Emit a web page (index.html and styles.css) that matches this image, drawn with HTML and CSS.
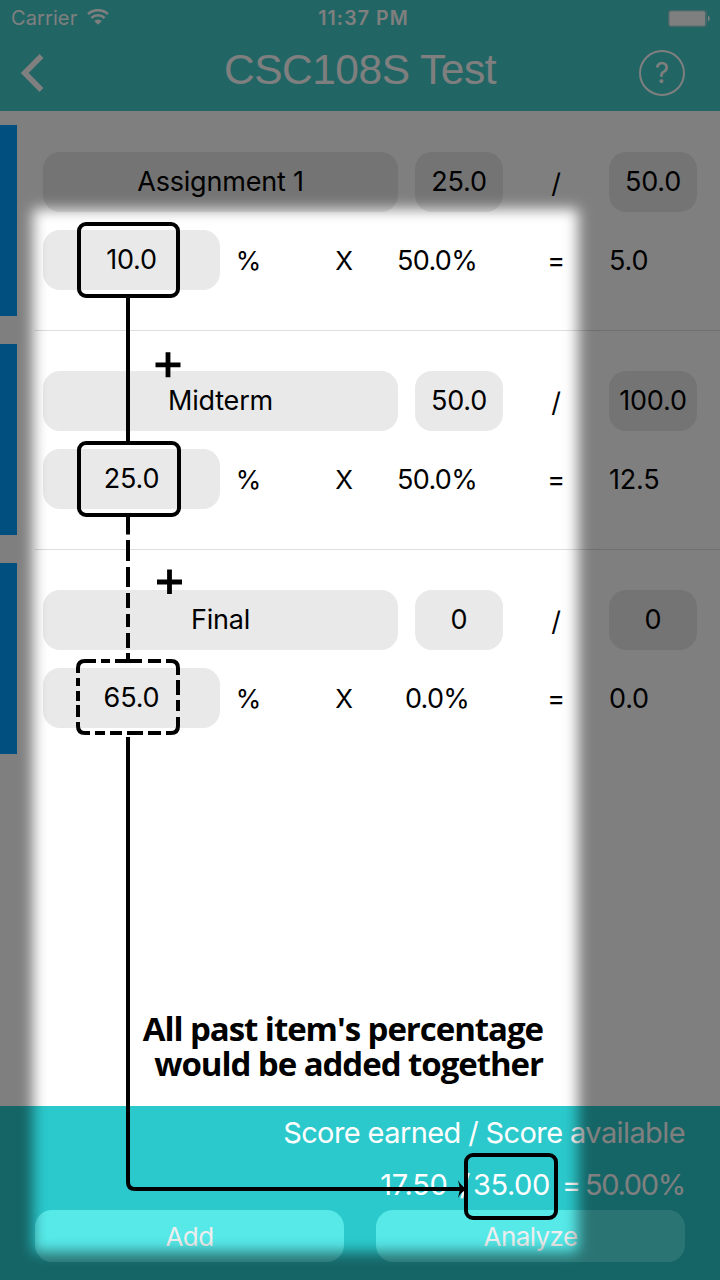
FILE: index.html
```html
<!DOCTYPE html>
<html lang="en">
<head>
<meta charset="utf-8">
<title>CSC108S Test</title>
<link rel="stylesheet" href="styles.css">
</head>
<body>
<div class="screen">
  <header class="header">
    <div class="status">
      <div class="carrier"><span class="carrier-name">Carrier</span>
        <svg class="wifi" width="22" height="16" viewBox="0 0 22 16"><g fill="none" stroke="#fff" stroke-width="2.5"><path d="M1 5.2a14.4 14.4 0 0 1 20 0"/><path d="M4.4 9a9.4 9.4 0 0 1 13.2 0"/></g><path d="M7.200 12a5.400 5.400 0 0 1 7.600 0L11 15.800z" fill="#fff"/></svg>
      </div>
      <span class="time">11:37 PM</span>
      <svg class="battery" width="42" height="17" viewBox="0 0 42 17"><rect x=".5" y=".5" width="38" height="16" rx="2.5" fill="none" stroke="#9fcaca"/><rect x="1.3" y="1.3" width="36" height="14.4" rx="1.5" fill="#fff"/><path d="M40 5.5c2.3 1 2.3 5 0 6z" fill="#fff"/></svg>
    </div>
    <div class="nav">
      <svg class="back" width="24" height="38" viewBox="0 0 24 38"><path d="M20.5 2 3.700 19l16.800 17" fill="none" stroke="#fff" stroke-width="5.500"/></svg>
      <h1 class="title">CSC108S Test</h1>
      <span class="help">?</span>
    </div>
  </header>

  <main class="list">
    <section class="item">
      <div class="line"><span class="field name">Assignment 1</span><span class="field small">25.0</span><span class="slash">/</span><span class="field small">50.0</span></div>
      <div class="line"><span class="field weight">10.0</span><span class="pct">%</span><span class="times">X</span><span class="ratio">50.0%</span><span class="equals">=</span><span class="result">5.0</span></div>
    </section>
    <section class="item">
      <div class="line"><span class="field name">Midterm</span><span class="field small">50.0</span><span class="slash">/</span><span class="field small">100.0</span></div>
      <div class="line"><span class="field weight">25.0</span><span class="pct">%</span><span class="times">X</span><span class="ratio">50.0%</span><span class="equals">=</span><span class="result">12.5</span></div>
    </section>
    <section class="item">
      <div class="line"><span class="field name">Final</span><span class="field small">0</span><span class="slash">/</span><span class="field small">0</span></div>
      <div class="line"><span class="field weight">65.0</span><span class="pct">%</span><span class="times">X</span><span class="ratio">0.0%</span><span class="equals">=</span><span class="result">0.0</span></div>
    </section>
  </main>

  <footer class="footer">
    <div class="legend">Score earned / Score available</div>
    <div class="totals"><span class="earned">17.50</span><span class="divider">/</span><span class="available">35.00</span><span class="eq">=</span><span class="percent">50.00%</span></div>
    <div class="buttons"><span class="button">Add</span><span class="button">Analyze</span></div>
  </footer>

  <svg class="overlay" width="720" height="1280" viewBox="0 0 720 1280">
    <defs>
      <filter id="soft" filterUnits="userSpaceOnUse" x="-60" y="100" width="800" height="1240"><feGaussianBlur stdDeviation="7"/></filter>
      <mask id="spot" maskUnits="userSpaceOnUse" x="0" y="0" width="720" height="1280">
        <rect width="720" height="1280" fill="#fff"/>
        <rect x="33" y="209" width="545" height="1043" fill="#000" filter="url(#soft)"/>
      </mask>
    </defs>
    <rect width="720" height="1280" fill="#000" fill-opacity=".5" mask="url(#spot)"/>
    <g fill="none" stroke="#000" stroke-width="4">
      <rect x="79" y="224" width="99" height="72" rx="7"/>
      <rect x="79" y="443" width="100" height="72" rx="7"/>
      <path d="M128 298v143"/>
      <path d="M128 517v17.500M128 540v21M128 567v20M128 593v15M128 614v13M128 633v15M128 653v8"/>
      <path d="M78 673v-5q0-7 7-7h11M101 661h9M115 661h27M148 661h13M166 661h5q7 0 7 7v7M178 680v15M178 700v11M178 717v9q0 7-7 7h-5M161 733h-13M143 733h-16M122 733h-12M105 733h-10M90 733h-5q-7 0-7-7v-4M78 717v-12M78 701v-10M78 686v-8"/>
      <path d="M128 737v445q0 7 7 7h328"/>
      <rect x="466" y="1155" width="90" height="63" rx="7"/>
      <path d="M155.500 364.800h25M168 352.300v25M157 582h25M169.500 569.500v24.500" stroke-width="4.800"/>
    </g>
    <path d="M458 1180q3 6 9 9-6 3-9 9l2-9z"/>
  </svg>
  <p class="note">All past item's percentage<br>would be added together</p>
</div>
</body>
</html>
```
FILE: styles.css
```css
* { box-sizing: border-box; }
body { margin: 0; background: #fff; font-family: Inter, "Liberation Sans", sans-serif; }
.screen { position: relative; display: flex; flex-direction: column; width: 720px; height: 1280px; overflow: hidden; font-size: 27px; letter-spacing: -0.2px; color: #000; }
.header { height: 111px; background: #42cac9; color: #fff; }
.status { display: grid; grid-template-columns: 1fr auto 1fr; align-items: center; height: 36px; padding: 0 10px 0 11px; font-size: 20px; letter-spacing: 0.1px; }
.carrier { display: flex; align-items: center; gap: 10px; }
.wifi { margin-top: -2px; }
.time { margin-left: 6px; font-weight: 600; font-size: 19.5px; letter-spacing: 1.1px; }
.battery { justify-self: end; }
.nav { display: grid; grid-template-columns: 46px 1fr 46px; align-items: center; height: 74px; padding: 0 35px 0 21px; }
.title { margin: -7px 0 0 14px; text-align: center; font: 400 42.5px/50px "Liberation Sans", sans-serif; letter-spacing: -0.5px; }
.help { display: grid; place-items: center; width: 46px; height: 46px; border: 2px solid #fff; border-radius: 50%; font-size: 28px; font-weight: 400; letter-spacing: 0; }
.list { flex: 1; background: #fff; }
.item { position: relative; display: flex; flex-direction: column; gap: 18px; height: 219px; padding: 41px 23px 0 43px; }
.item::before { content: ""; position: absolute; left: 0; top: 14px; width: 17px; height: 191px; background: #009fff; }
.item:not(:last-child)::after { content: ""; position: absolute; left: 35px; right: 0; bottom: -1px; height: 1px; background: #dedede; }
.line { display: flex; align-items: center; height: 60px; }
.field { display: flex; align-items: center; justify-content: center; height: 60px; padding-bottom: 2px; border-radius: 17px; background: #e9e9e9; }
.name { width: 355px; margin-right: 17px; }
.small { width: 88px; }
.weight { width: 177px; }
.slash { width: 106px; padding-top: 3px; text-align: center; }
.pct { width: 57px; padding-top: 1px; text-align: center; font-size: 26px; }
.times { width: 134px; padding-top: 1px; text-align: center; font-size: 26px; }
.ratio { width: 52px; padding-top: 1px; display: flex; justify-content: center; letter-spacing: -0.7px; }
.equals { width: 186px; padding-top: 1px; text-align: center; }
.result { width: 80px; margin-left: -40px; padding-top: 1px; }
.footer { height: 174px; padding: 8px 35px 18px; background: #2bc9cc; color: #fff; }
.legend { height: 38px; line-height: 38px; text-align: right; font-size: 29px; letter-spacing: -0.6px; }
.totals { display: flex; justify-content: flex-end; height: 58px; padding-top: 4px; line-height: 58px; font-size: 29px; }
.earned { letter-spacing: -0.2px; }
.divider { margin: 0 3px 0 12px; }
.available { letter-spacing: -0.4px; }
.eq { margin: 0 4px 0 12px; }
.percent { letter-spacing: -1.3px; }
.buttons { display: flex; gap: 32px; height: 52px; }
.button { flex: 1; border-radius: 17px; background: #56e9e8; color: #eee; text-align: center; line-height: 54px; font-size: 26px; letter-spacing: -0.6px; }
.overlay { position: absolute; inset: 0; }
.note { position: absolute; right: 177px; top: 1011px; margin: 0; text-align: right; font: 700 33px/35px "Open Sans", sans-serif; letter-spacing: -1.05px; white-space: nowrap; }
```
